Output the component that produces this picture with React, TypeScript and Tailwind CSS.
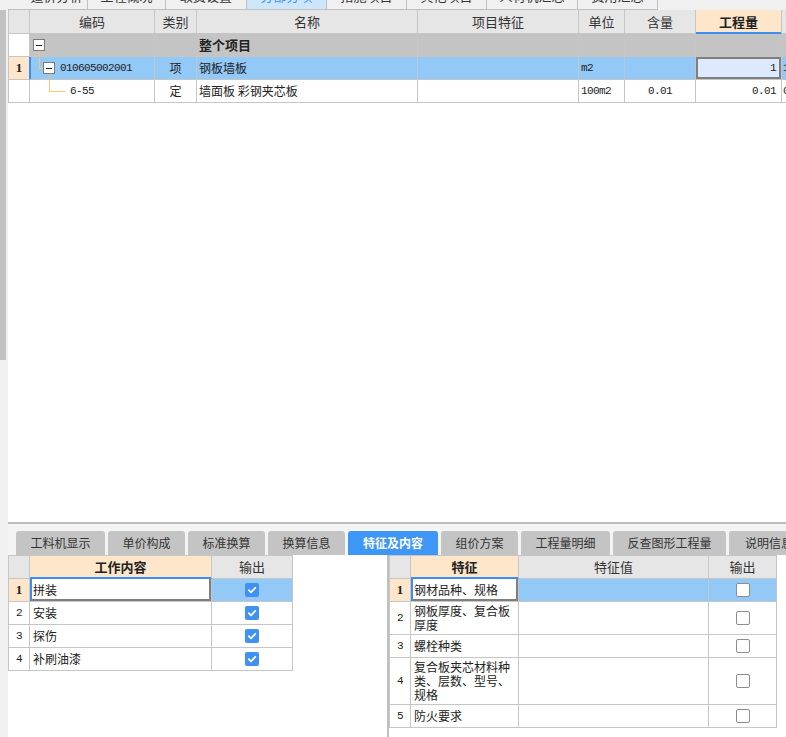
import React from "react";

const grid = "border-[#c6c6c6]";
const mono = "font-['Liberation_Mono','Noto_Sans_CJK_SC',monospace] text-[11px] tracking-[-0.6px]";

type Col = { w: string; title: string; active?: boolean };

const topCols: Col[] = [
  { w: "w-[21px]", title: "" },
  { w: "w-[125px]", title: "编码" },
  { w: "w-[42px]", title: "类别" },
  { w: "w-[221px]", title: "名称" },
  { w: "w-[161px]", title: "项目特征" },
  { w: "w-[46px]", title: "单位" },
  { w: "w-[71px]", title: "含量" },
  { w: "w-[86px]", title: "工程量", active: true },
  { w: "w-[60px]", title: "" },
];

const topTabs = [
  { label: "造价分析", w: "w-[80px] pl-[18px]" },
  { label: "工程概况", w: "w-[78px]" },
  { label: "取费设置", w: "w-[81px]" },
  { label: "分部分项", w: "w-[80px]", active: true },
  { label: "措施项目", w: "w-[80px]" },
  { label: "其他项目", w: "w-[80px]" },
  { label: "人材机汇总", w: "w-[91px]" },
  { label: "费用汇总", w: "w-[80px]" },
];

const bottomTabs = [
  { label: "工料机显示", w: "w-[89px]" },
  { label: "单价构成", w: "w-[77px]" },
  { label: "标准换算", w: "w-[77px]" },
  { label: "换算信息", w: "w-[77px]" },
  { label: "特征及内容", w: "w-[90px]", active: true },
  { label: "组价方案", w: "w-[77px]" },
  { label: "工程量明细", w: "w-[89px]" },
  { label: "反查图形工程量", w: "w-[113px]" },
  { label: "说明信息", w: "w-[80px]" },
];

const workItems = ["拼装", "安装", "探伤", "补刷油漆"];

const features = [
  { text: "钢材品种、规格", h: "h-[23px]" },
  { text: "钢板厚度、复合板厚度", h: "h-[33px]" },
  { text: "螺栓种类", h: "h-[23px]" },
  { text: "复合板夹芯材料种类、层数、型号、规格", h: "h-[47px]" },
  { text: "防火要求", h: "h-[23px]" },
];

const Cell: React.FC<{ w: string; className?: string; wrap?: boolean; children?: React.ReactNode }> = ({
  w,
  className = "",
  wrap,
  children,
}) => (
  <div
    className={`${w} shrink-0 h-full border-r border-b ${grid} flex items-center overflow-hidden ${
      wrap ? "whitespace-normal" : "whitespace-nowrap"
    } ${className}`}
  >
    {children}
  </div>
);

const Minus = () => (
  <div className="w-[12px] h-[12px] border border-[#7b7b7b] bg-white flex items-center justify-center">
    <div className="w-[6px] h-px bg-[#222]" />
  </div>
);

const Check = ({ on }: { on: boolean }) =>
  on ? (
    <div className="w-[14px] h-[14px] rounded-[2px] bg-[#3f92f2] flex items-center justify-center">
      <svg width="10" height="10" viewBox="0 0 10 10">
        <path
          d="M1.8 5.2 L4 7.3 L8.3 2.8"
          fill="none"
          stroke="white"
          strokeWidth="1.8"
          strokeLinecap="round"
          strokeLinejoin="round"
        />
      </svg>
    </div>
  ) : (
    <div className="w-[14px] h-[14px] rounded-[2px] border border-[#8c8c8c] bg-white" />
  );

const HeaderCell: React.FC<{ w: string; active?: boolean; children?: React.ReactNode }> = ({
  w,
  active,
  children,
}) => (
  <Cell
    w={w}
    className={`justify-center text-[13px] ${
      active
        ? "bg-[#fde6c9] font-bold text-[#222] border-b-[#3d8ef0] shadow-[inset_0_-1px_0_#3d8ef0]"
        : "text-[#333]"
    }`}
  >
    {children}
  </Cell>
);

export default function App() {
  return (
    <div className="w-[786px] h-[737px] overflow-hidden flex bg-[#f0f0f0] font-['Noto_Sans_CJK_SC','Noto_Sans',sans-serif] text-[12px] text-[#222]">
      {/* left strip */}
      <div className="w-[8px] shrink-0">
        <div className="mt-[10px] w-[6px] h-[350px] bg-[#c2c2c2]" />
      </div>

      <div className="w-[778px] shrink-0 flex flex-col">
        {/* top tabs (mostly scrolled out) */}
        <div className="h-[10px] overflow-hidden bg-[#f0f0f0]">
          <div className="flex h-[24px] -mt-[14px]">
            {topTabs.map((t) => (
              <div
                key={t.label}
                className={`${t.w} shrink-0 h-full flex items-start pt-[3px] justify-center border-r border-b border-[#c0c0c0] text-[13px] leading-[14px] ${
                  t.active ? "bg-[#cde6fb] text-[#3c96f0]" : "text-[#333]"
                }`}
              >
                {t.label}
              </div>
            ))}
          </div>
        </div>

        {/* top grid */}
        <div className="h-[512px] bg-white overflow-hidden">
          <div className={`border-l ${grid}`}>
            <div className="flex h-[24px] bg-[#e6e6e6]">
              {topCols.map((c, i) => (
                <HeaderCell key={i} w={c.w} active={c.active}>
                  {c.title}
                </HeaderCell>
              ))}
            </div>

            {/* 整个项目 */}
            <div className="flex h-[23px] bg-[#c4c4c4]">
              <Cell w="w-[21px]" className="bg-white" />
              <Cell w="w-[125px]" className="relative">
                <div className="absolute left-[3px] top-[5px]">
                  <Minus />
                </div>
                <div className="absolute left-[9px] top-[17px] bottom-0 w-px bg-[#ffc46e]" />
              </Cell>
              <Cell w="w-[42px]" />
              <Cell w="w-[221px]" className="pl-[2px] font-bold text-[13px]">
                整个项目
              </Cell>
              <Cell w="w-[161px]" />
              <Cell w="w-[46px]" />
              <Cell w="w-[71px]" />
              <Cell w="w-[86px]" />
              <Cell w="w-[60px]" />
            </div>

            {/* 1 */}
            <div className="flex h-[23px] bg-[#93c9f7]">
              <Cell
                w="w-[21px]"
                className="bg-[#fde6c9] justify-center font-bold text-[13px] border-r-[#3d8ef0] font-['Liberation_Serif',serif]"
              >
                1
              </Cell>
              <Cell w="w-[125px]" className="relative pl-[30px] shadow-[inset_1px_0_0_#3d8ef0]">
                <div className="absolute left-[9px] top-0 h-[12px] w-px bg-[#ffc46e]" />
                <div className="absolute left-[9px] top-[11px] w-[4px] h-px bg-[#ffc46e]" />
                <div className="absolute left-[13px] top-[5px]">
                  <Minus />
                </div>
                <div className="absolute left-[19px] top-[17px] bottom-0 w-px bg-[#ffc46e]" />
                <span className={mono}>010605002001</span>
              </Cell>
              <Cell w="w-[42px]" className="justify-center">
                项
              </Cell>
              <Cell w="w-[221px]" className="pl-[2px]">
                钢板墙板
              </Cell>
              <Cell w="w-[161px]" />
              <Cell w="w-[46px]" className="pl-[2px]">
                <span className={mono}>m2</span>
              </Cell>
              <Cell w="w-[71px]" />
              <Cell
                w="w-[86px]"
                className="justify-end pr-[5px] bg-[#dde9fc] shadow-[inset_0_0_0_2px_#7f7f7f]"
              >
                <span className={mono}>1</span>
              </Cell>
              <Cell w="w-[60px]" className="pl-[1px]">
                <span className={mono}>1</span>
              </Cell>
            </div>

            {/* 6-55 */}
            <div className="flex h-[23px] bg-white">
              <Cell w="w-[21px]" />
              <Cell w="w-[125px]" className="relative pl-[40px]">
                <div className="absolute left-[19px] top-0 h-[12px] w-px bg-[#ffc46e]" />
                <div className="absolute left-[19px] top-[11px] w-[16px] h-px bg-[#ffc46e]" />
                <span className={mono}>6-55</span>
              </Cell>
              <Cell w="w-[42px]" className="justify-center">
                定
              </Cell>
              <Cell w="w-[221px]" className="pl-[2px]">
                墙面板 彩钢夹芯板
              </Cell>
              <Cell w="w-[161px]" />
              <Cell w="w-[46px]" className="pl-[2px]">
                <span className={mono}>100m2</span>
              </Cell>
              <Cell w="w-[71px]" className="justify-center">
                <span className={mono}>0.01</span>
              </Cell>
              <Cell w="w-[86px]" className="justify-end pr-[5px]">
                <span className={mono}>0.01</span>
              </Cell>
              <Cell w="w-[60px]" className="pl-[1px]">
                <span className={mono}>0.01</span>
              </Cell>
            </div>
          </div>
        </div>

        <div className="h-[2px] bg-[#bdbdbd]" />

        {/* bottom tabs */}
        <div className="h-[31px] bg-[#f4f4f4] flex items-end gap-[3px] pl-[8px] overflow-hidden">
          {bottomTabs.map((t) => (
            <div
              key={t.label}
              className={`${t.w} shrink-0 h-[24px] rounded-t-[3px] flex items-center justify-center text-[12px] whitespace-nowrap ${
                t.active ? "bg-[#3f97f5] text-white font-bold" : "bg-[#c4c4c4] text-[#333]"
              }`}
            >
              {t.label}
            </div>
          ))}
        </div>

        {/* bottom panels */}
        <div className="flex h-[182px]">
          {/* 工作内容 */}
          <div className="w-[379px] shrink-0 bg-white">
            <div className={`inline-block border-l border-t ${grid}`}>
              <div className="flex h-[23px] bg-[#e6e6e6]">
                <HeaderCell w="w-[21px]" />
                <HeaderCell w="w-[182px]" active>
                  工作内容
                </HeaderCell>
                <HeaderCell w="w-[81px]">输出</HeaderCell>
              </div>
              {workItems.map((item, i) => {
                const sel = i === 0;
                return (
                  <div key={item} className="flex h-[23px]">
                    <Cell
                      w="w-[21px]"
                      className={`justify-center ${
                        sel
                          ? "bg-[#fde6c9] font-bold text-[13px] font-['Liberation_Serif',serif]"
                          : mono
                      }`}
                    >
                      {i + 1}
                    </Cell>
                    <Cell
                      w="w-[182px]"
                      className={`pl-[3px] ${
                        sel ? "shadow-[inset_2px_0_0_#3d8ef0,inset_-2px_-2px_0_#7f7f7f]" : ""
                      }`}
                    >
                      {item}
                    </Cell>
                    <Cell w="w-[81px]" className={`justify-center ${sel ? "bg-[#93c9f7]" : ""}`}>
                      <Check on />
                    </Cell>
                  </div>
                );
              })}
            </div>
          </div>

          <div className="w-[2px] shrink-0 bg-[#c0c0c0]" />

          {/* 特征 */}
          <div className="flex-1 bg-white">
            <div className={`inline-block border-l border-t ${grid}`}>
              <div className="flex h-[23px] bg-[#e6e6e6]">
                <HeaderCell w="w-[21px]" />
                <HeaderCell w="w-[108px]" active>
                  特征
                </HeaderCell>
                <HeaderCell w="w-[190px]">特征值</HeaderCell>
                <HeaderCell w="w-[68px]">输出</HeaderCell>
              </div>
              {features.map((f, i) => {
                const sel = i === 0;
                return (
                  <div key={f.text} className={`flex ${f.h}`}>
                    <Cell
                      w="w-[21px]"
                      className={`justify-center ${
                        sel
                          ? "bg-[#fde6c9] font-bold text-[13px] font-['Liberation_Serif',serif]"
                          : mono
                      }`}
                    >
                      {i + 1}
                    </Cell>
                    <Cell
                      w="w-[108px]"
                      wrap
                      className={`pl-[3px] pr-[2px] leading-[14px] ${
                        sel ? "shadow-[inset_2px_0_0_#3d8ef0,inset_-2px_-2px_0_#7f7f7f]" : ""
                      }`}
                    >
                      <span className="block">{f.text}</span>
                    </Cell>
                    <Cell w="w-[190px]" className={sel ? "bg-[#93c9f7]" : ""} />
                    <Cell w="w-[68px]" className={`justify-center ${sel ? "bg-[#93c9f7]" : ""}`}>
                      <Check on={false} />
                    </Cell>
                  </div>
                );
              })}
            </div>
          </div>
        </div>
      </div>
    </div>
  );
}
